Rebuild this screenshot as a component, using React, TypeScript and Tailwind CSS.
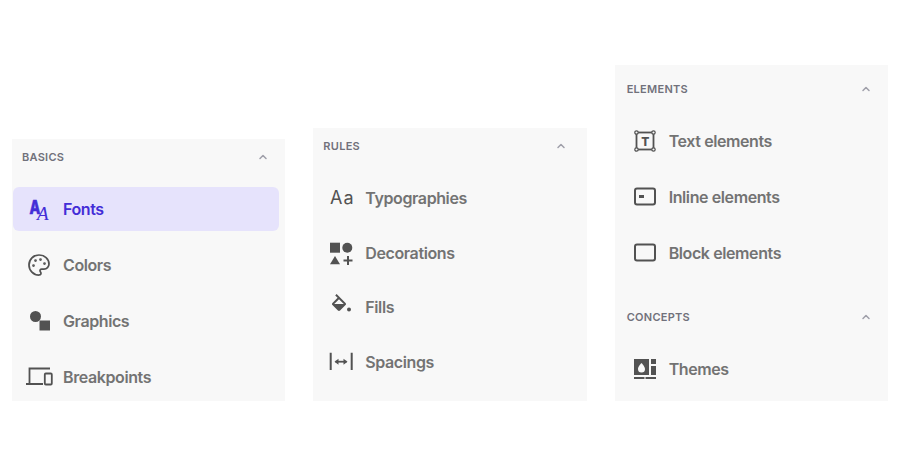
import type { ReactNode } from 'react'
import { ChevronUp, Palette } from 'lucide-react'

type IconProps = { children: ReactNode }

function Glyph({ children }: IconProps) {
  return (
    <svg viewBox="0 0 24 24" fill="currentColor" className="h-6 w-6 shrink-0 overflow-visible">
      {children}
    </svg>
  )
}

const FontsIcon = () => (
  <Glyph>
    <text x="2.5" y="17" fontFamily="Inter" fontSize="19" fontWeight="800" stroke="currentColor" strokeWidth="0.6" textLength="10.5" lengthAdjust="spacingAndGlyphs">A</text>
    <text x="10" y="23" fontFamily="Liberation Serif" fontSize="19" fontStyle="italic" fontWeight="400">A</text>
  </Glyph>
)

const GraphicsIcon = () => (
  <Glyph>
    <circle cx="8.5" cy="7.5" r="5.5" />
    <rect x="12.5" y="11.5" width="10.5" height="10" />
  </Glyph>
)

const BreakpointsIcon = () => (
  <Glyph>
    <path d="M23 3.5H2.5V19M-1 19H16" fill="none" stroke="currentColor" strokeWidth="1.8" />
    <rect x="17.8" y="8.5" width="7" height="11" rx="1" fill="none" stroke="currentColor" strokeWidth="1.8" />
  </Glyph>
)

const TypographiesIcon = () => (
  <Glyph>
    <text x="1" y="18" fontFamily="Inter" fontSize="18" fontWeight="400" letterSpacing="1">Aa</text>
  </Glyph>
)

const DecorationsIcon = () => (
  <Glyph>
    <rect x="1" y="1.7" width="10" height="10" />
    <circle cx="18.3" cy="6.7" r="5" />
    <path d="M1 23.3h10L6 15z" />
    <path d="M19 15v9M14.5 19.4h9" fill="none" stroke="currentColor" strokeWidth="2" />
  </Glyph>
)

const FillsIcon = () => (
  <Glyph>
    <g transform="translate(0 -1)">
      <path d="M16.56 8.94 7.62 0 6.21 1.41l2.38 2.38-5.15 5.15c-.59.59-.59 1.54 0 2.12l5.5 5.5c.29.29.68.44 1.06.44s.77-.15 1.06-.44l5.5-5.5c.59-.58.59-1.53 0-2.12zM5.21 10 10 5.21 14.79 10H5.21z" />
      <circle cx="20" cy="15.5" r="2" />
    </g>
  </Glyph>
)

const SpacingsIcon = () => (
  <Glyph>
    <path d="M1.7 2.7V20M22.7 2.7V20" fill="none" stroke="currentColor" strokeWidth="2" />
    <path d="M6.5 11.7h11" fill="none" stroke="currentColor" strokeWidth="1.8" />
    <path d="M5.500 11.700 9.500 8.700v6zM18.500 11.700l-4-3v6z" />
  </Glyph>
)

const TextIcon = () => (
  <Glyph>
    <rect x="3.5" y="3.5" width="17" height="17" fill="none" stroke="currentColor" strokeWidth="1.8" />
    {[[3.5, 3.5], [20.5, 3.5], [3.5, 20.5], [20.5, 20.5]].map(([cx, cy]) => (
      <circle key={`${cx}-${cy}`} cx={cx} cy={cy} r="1.7" fill="#f8f8f8" stroke="currentColor" strokeWidth="1.2" />
    ))}
    <text x="12" y="16.5" textAnchor="middle" fontFamily="Inter" fontSize="12" fontWeight="800">T</text>
  </Glyph>
)

const InlineIcon = () => (
  <Glyph>
    <rect x="2" y="3.5" width="20" height="16" rx="2" fill="none" stroke="currentColor" strokeWidth="2" />
    <rect x="6" y="10" width="5" height="3" />
  </Glyph>
)

const BlockIcon = () => (
  <Glyph>
    <rect x="2" y="3.5" width="20" height="16" rx="2" fill="none" stroke="currentColor" strokeWidth="2" />
  </Glyph>
)

const ThemesIcon = () => (
  <Glyph>
    <rect x="1" y="2" width="15" height="16" />
    <path d="M8.5 6s-3.5 3.600-3.500 6a3.500 3.500 0 0 0 7 0c0-2.400-3.500-6-3.500-6z" fill="#f8f8f8" />
    <rect x="18" y="2" width="5" height="5" />
    <rect x="18" y="9" width="5" height="9" />
    <rect x="1" y="20" width="10.500" height="2" />
    <rect x="12.500" y="20" width="10.500" height="2" />
  </Glyph>
)

function Header({ title, className }: { title: string; className: string }) {
  return (
    <div className={`flex h-9 items-center justify-between ${className}`}>
      <span className="text-[11px] font-semibold tracking-wide text-zinc-500">{title}</span>
      <ChevronUp size={12} strokeWidth={3} className="text-zinc-400" />
    </div>
  )
}

type RowProps = {
  icon: ReactNode
  label: string
  active?: boolean
  className?: string
}

function Row({ icon, label, active, className = '' }: RowProps) {
  return (
    <div
      className={`flex h-11 items-center gap-3 rounded-md text-base font-semibold tracking-tight ${
        active ? 'bg-[#e6e3fc] text-indigo-700' : 'text-neutral-500'
      } ${className}`}
    >
      <span className={active ? '' : 'text-neutral-600'}>{icon}</span>
      <span>{label}</span>
    </div>
  )
}

export default function App() {
  return (
    <div className="grid h-screen grid-cols-3 items-end gap-7 bg-white px-3 pb-15 font-['Inter',sans-serif]">
      <section className="bg-[#f8f8f8] pb-0.5">
        <Header title="BASICS" className="pr-4 pl-2.5" />
        <div className="mt-3 flex flex-col gap-3 pr-1.5 pl-px">
          <Row icon={<FontsIcon />} label="Fonts" active className="px-3.5" />
          <Row icon={<Palette size={24} strokeWidth={1.75} className="shrink-0" />} label="Colors" className="px-3.5" />
          <Row icon={<GraphicsIcon />} label="Graphics" className="px-3.5" />
          <Row icon={<BreakpointsIcon />} label="Breakpoints" className="px-3.5" />
        </div>
      </section>

      <section className="bg-[#f8f8f8] pb-4.25">
        <Header title="RULES" className="pr-5 pl-2.5" />
        <div className="mt-3 flex h-52 flex-col justify-between px-4">
          <Row icon={<TypographiesIcon />} label="Typographies" />
          <Row icon={<DecorationsIcon />} label="Decorations" />
          <Row icon={<FillsIcon />} label="Fills" />
          <Row icon={<SpacingsIcon />} label="Spacings" />
        </div>
      </section>

      <section className="bg-[#f8f8f8] pt-1.5 pb-2.5">
        <Header title="ELEMENTS" className="pr-4 pl-3" />
        <div className="mt-3 flex flex-col gap-3 px-4.5">
          <Row icon={<TextIcon />} label="Text elements" />
          <Row icon={<InlineIcon />} label="Inline elements" />
          <Row icon={<BlockIcon />} label="Block elements" />
        </div>
        <Header title="CONCEPTS" className="mt-6 pr-4 pl-3" />
        <div className="mt-3 px-4.5">
          <Row icon={<ThemesIcon />} label="Themes" />
        </div>
      </section>
    </div>
  )
}
